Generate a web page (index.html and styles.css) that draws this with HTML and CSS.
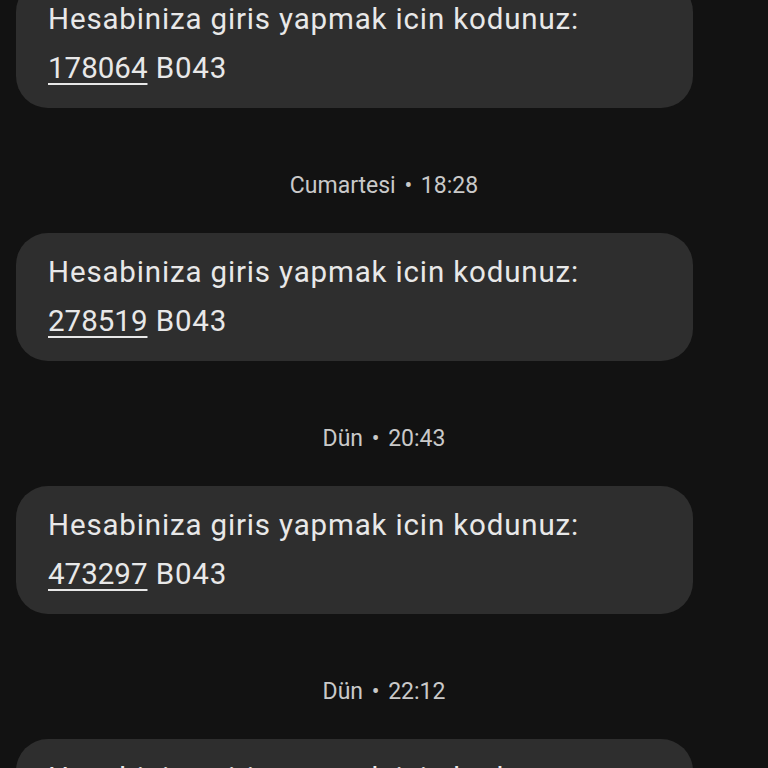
FILE: index.html
```html
<!DOCTYPE html>
<html lang="tr">
<head>
<meta charset="utf-8">
<title>Mesajlar</title>
<link rel="stylesheet" href="styles.css">
</head>
<body>
<main class="thread">
  <div class="bubble">
    <p class="line">Hesabiniza giris yapmak icin kodunuz:</p>
    <p class="line"><span class="code">178064</span> B043</p>
  </div>
  <div class="stamp">Cumartesi • 18:28</div>
  <div class="bubble">
    <p class="line">Hesabiniza giris yapmak icin kodunuz:</p>
    <p class="line"><span class="code">278519</span> B043</p>
  </div>
  <div class="stamp">Dün • 20:43</div>
  <div class="bubble">
    <p class="line">Hesabiniza giris yapmak icin kodunuz:</p>
    <p class="line"><span class="code">473297</span> B043</p>
  </div>
  <div class="stamp">Dün • 22:12</div>
  <div class="bubble">
    <p class="line">Hesabiniza giris yapmak icin kodunuz:</p>
    <p class="line"><span class="code">519920</span> B043</p>
  </div>
</main>
</body>
</html>
```

FILE: styles.css
```css
html, body {
  margin: 0;
  padding: 0;
  background: #121212;
  height: 100%;
  overflow: hidden;
}

.thread {
  display: flex;
  flex-direction: column;
  margin-top: -20px;
  font-family: Roboto, "Noto Sans", sans-serif;
}

.bubble {
  box-sizing: border-box;
  width: 677px;
  margin-left: 16px;
  height: 128px;
  padding: 15px 32px 14px;
  background: #2e2e2e;
  border-radius: 32px;
  color: #e8e8e8;
  font-size: 29.5px;
  line-height: 49px;
  letter-spacing: 0.85px;
}

.line {
  margin: 0;
  white-space: nowrap;
}

.code {
  letter-spacing: 0;
  text-decoration: underline;
  text-decoration-thickness: 2px;
  text-underline-offset: 5px;
}

.stamp {
  margin: 63px 0 32px;
  text-align: center;
  color: #c9c9c9;
  font-size: 23px;
  line-height: 30px;
  word-spacing: 3px;
}
```
